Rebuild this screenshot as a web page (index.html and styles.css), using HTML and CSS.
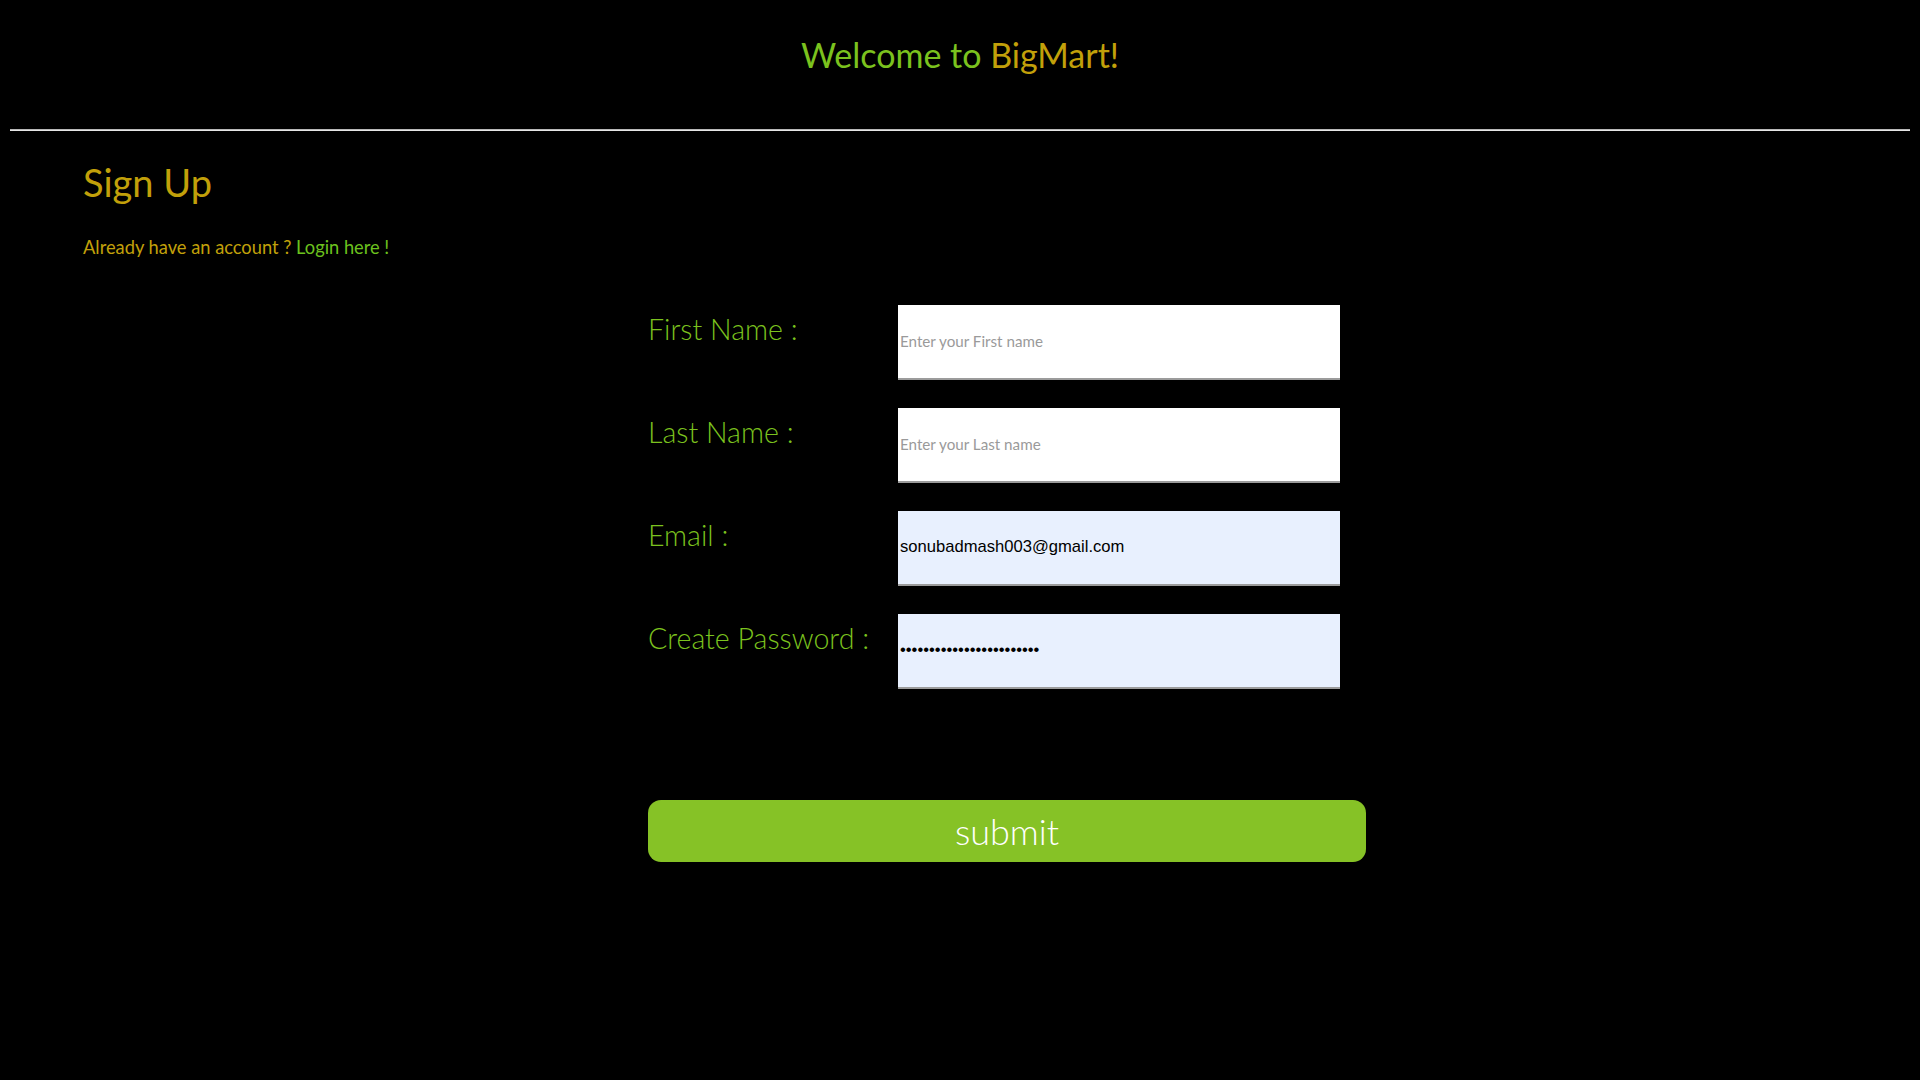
FILE: index.html
```html
<!DOCTYPE html>
<html lang="en">
<head>
    <meta charset="UTF-8">
    <meta name="viewport" content="width=device-width, initial-scale=1.0">
    <title>BigMart - Sign Up</title>
    <link rel="stylesheet" href="styles.css">
</head>
<body>
    <div class="header">
        <h1><span class="green">Welcome to</span> <span class="gold">BigMart!</span></h1>
    </div>
    <hr class="line">

    <div class="signup">
        <h2>Sign Up</h2>
        <p class="login-text">Already have an account ? <a href="login.html">Login here !</a></p>
    </div>

    <form class="signup-form" action="#" onsubmit="return false;">
        <div class="fields">
            <label for="firstName">First Name :</label>
            <input type="text" id="firstName" placeholder="Enter your First name">

            <label for="lastName">Last Name :</label>
            <input type="text" id="lastName" placeholder="Enter your Last name">

            <label for="email">Email :</label>
            <input type="email" id="email" class="filled" value="sonubadmash003@gmail.com">

            <label for="password">Create Password :</label>
            <input type="password" id="password" class="filled" value="sonubadmash003@gmail1234">
        </div>
        <button type="submit" class="submit-btn">submit</button>
    </form>
</body>
</html>
```

FILE: styles.css
```css
html {
    background-color: #000000;
}
body {
    font-family: Lato, "Open Sans", sans-serif;
    background-color: #000000;
    margin: 8px;
    min-height: 1064px;
}
.green {
    color: #7bc21e;
}
.gold {
    color: #c2a00a;
}
.header {
    height: 121px;
    box-sizing: border-box;
    padding-top: 27px;
    text-align: center;
}
.header h1 {
    margin: 0;
    font-size: 34px;
    font-weight: normal;
    line-height: 1.2;
}
.line {
    margin: 0 2px;
    height: 0;
    border: none;
    border-top: 1px solid #b8b8b8;
    border-bottom: 1px solid #e6e6e6;
}
.signup {
    padding-left: 75px;
}
.signup h2 {
    margin: 29px 0 0 0;
    font-size: 38px;
    font-weight: normal;
    line-height: 1.2;
    color: #c2a00a;
}
.login-text {
    margin: 31px 0 0 0;
    font-size: 18.3px;
    line-height: 1.2;
    color: #c2a00a;
}
.login-text a {
    color: #6cc21e;
    text-decoration: none;
}
.signup-form {
    margin: 46px 0 0 640px;
    width: 718px;
}
.fields {
    display: grid;
    grid-template-columns: 250px 442px;
    row-gap: 28px;
}
.fields label {
    padding-top: 7px;
    font-size: 28.6px;
    font-weight: 300;
    line-height: 1.2;
    color: #7bc21e;
}
.fields input {
    box-sizing: border-box;
    height: 75px;
    margin: 0;
    padding: 0 2px;
    border: none;
    border-bottom: 2px solid #9b9b9b;
    border-radius: 0;
    background-color: #ffffff;
    font-family: Lato, "Open Sans", sans-serif;
    font-size: 15.2px;
    color: #000000;
    outline: none;
}
.fields input::placeholder {
    color: #9a9a9a;
}
.fields input.filled {
    background-color: #e8f0fe;
    font-family: "Liberation Sans", Arial, sans-serif;
    font-size: 16.6px;
}
.submit-btn {
    display: block;
    width: 718px;
    height: 62px;
    margin-top: 111px;
    border: none;
    border-radius: 13px;
    background-color: #86c226;
    color: #ffffff;
    font-family: Lato, "Open Sans", sans-serif;
    font-size: 36px;
    font-weight: 300;
    cursor: pointer;
}
```
